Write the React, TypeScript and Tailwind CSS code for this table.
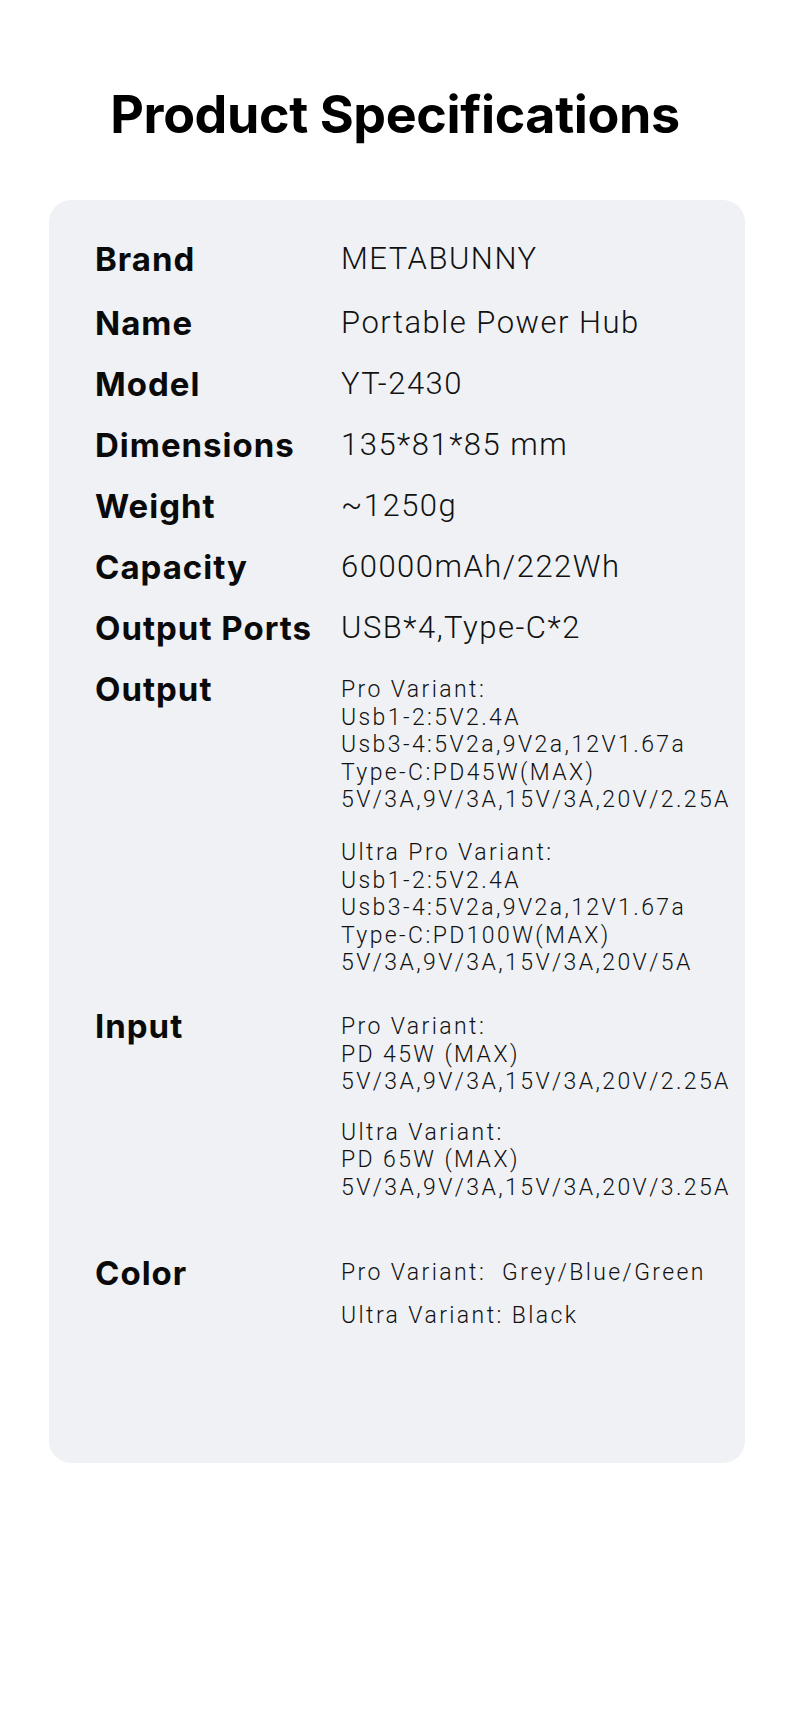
const specs: { label: string; value: string }[] = [
  { label: 'Brand', value: 'METABUNNY' },
  { label: 'Name', value: 'Portable Power Hub' },
  { label: 'Model', value: 'YT-2430' },
  { label: 'Dimensions', value: '135*81*85 mm' },
  { label: 'Weight', value: '~1250g' },
  { label: 'Capacity', value: '60000mAh/222Wh' },
  { label: 'Output Ports', value: 'USB*4,Type-C*2' },
];

const outputGroups = [
  ['Pro Variant:', 'Usb1-2:5V2.4A', 'Usb3-4:5V2a,9V2a,12V1.67a', 'Type-C:PD45W(MAX)', '5V/3A,9V/3A,15V/3A,20V/2.25A'],
  ['Ultra Pro Variant:', 'Usb1-2:5V2.4A', 'Usb3-4:5V2a,9V2a,12V1.67a', 'Type-C:PD100W(MAX)', '5V/3A,9V/3A,15V/3A,20V/5A'],
];

const inputGroups = [
  ['Pro Variant:', 'PD 45W (MAX)', '5V/3A,9V/3A,15V/3A,20V/2.25A'],
  ['Ultra Variant:', 'PD 65W (MAX)', '5V/3A,9V/3A,15V/3A,20V/3.25A'],
];

const labelCls = "w-[246px] shrink-0 font-['Inter',sans-serif] font-bold text-[33px] leading-[40px] tracking-[1px] text-[#0a0a0a]";
const smallCls = "font-['Roboto',sans-serif] font-light text-[23px] leading-[27.6px] tracking-[2.4px] text-[#111] whitespace-nowrap";

function Group({ lines, gapCls }: { lines: string[][]; gapCls: string }) {
  return (
    <div className={`flex flex-col ${gapCls} pt-[7px]`}>
      {lines.map((g, i) => (
        <div key={i} className={smallCls}>
          {g.map((l, j) => (
            <div key={j}>{l}</div>
          ))}
        </div>
      ))}
    </div>
  );
}

export default function App() {
  return (
    <div className="w-[790px] min-h-[1711px] bg-white pt-[88px] pb-[250px]">
      <h1 className="text-center font-['Inter',sans-serif] font-bold text-[52px] leading-[53px] tracking-[-0.4px] text-black">
        Product Specifications
      </h1>

      <div className="ml-[49px] mt-[59px] w-[696px] rounded-[22px] bg-[#eff1f5] pl-[46px] pt-[39px] pb-[133px]">
        <div className="flex flex-col gap-[21px]">
          {specs.map((s, i) => (
            <div key={s.label} className={`flex items-start ${i === 1 ? 'mt-[3px]' : ''}`}>
              <div className={labelCls}>{s.label}</div>
              <div className="font-['Roboto',sans-serif] font-light text-[31px] leading-[40px] tracking-[1.5px] text-[#111] whitespace-nowrap">
                {s.value}
              </div>
            </div>
          ))}

          <div className="flex items-start">
            <div className={labelCls}>Output</div>
            <Group lines={outputGroups} gapCls="gap-[25px]" />
          </div>

          <div className="mt-[8px] flex items-start">
            <div className={labelCls}>Input</div>
            <Group lines={inputGroups} gapCls="gap-[23px]" />
          </div>

          <div className="mt-[30px] flex items-start">
            <div className={labelCls}>Color</div>
            <div className={`flex flex-col gap-[16px] pt-[6px] ${smallCls}`}>
              <div>Pro Variant:&nbsp; Grey/Blue/Green</div>
              <div>Ultra Variant: Black</div>
            </div>
          </div>
        </div>
      </div>
    </div>
  );
}
